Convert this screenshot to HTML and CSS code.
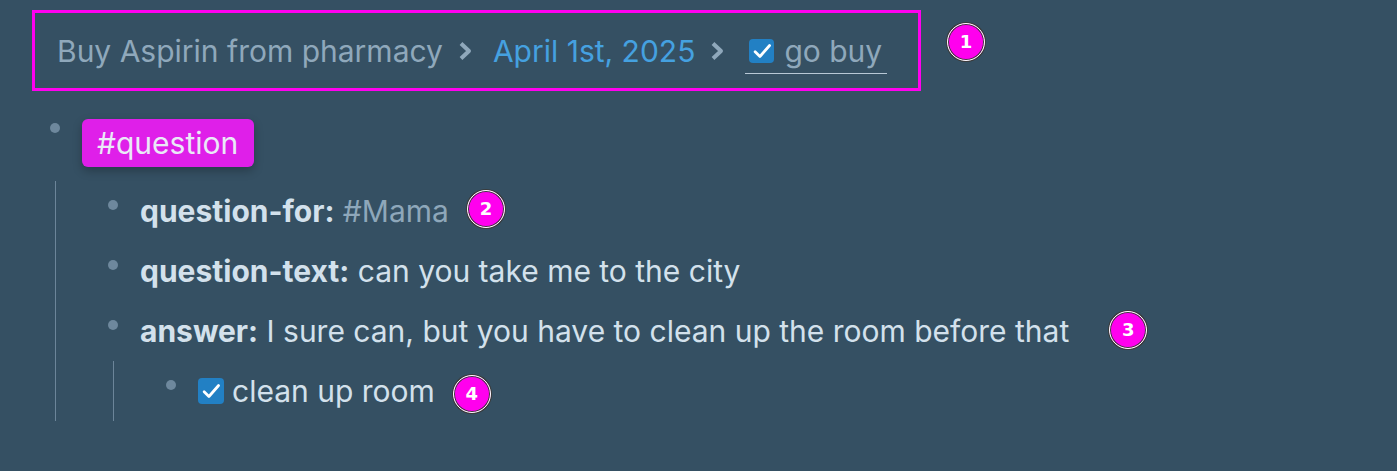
FILE: index.html
```html
<!DOCTYPE html>
<html lang="en">
<head>
  <meta charset="UTF-8">
  <title>Question block</title>
  <link rel="stylesheet" href="styles.css">
</head>
<body>
  <div class="page">

    <!-- Breadcrumb -->
    <div class="crumb-row">
      <div class="crumbs">
        <span class="crumb">Buy Aspirin from pharmacy</span>
        <svg class="chevron" viewBox="0 0 14 20"><path d="M3 2.5 L11 10 L3 17.5"/></svg>
        <span class="crumb crumb-date">April 1st, 2025</span>
        <svg class="chevron" viewBox="0 0 14 20"><path d="M3 2.5 L11 10 L3 17.5"/></svg>
        <span class="crumb-current">
          <span class="check check-sm"><svg viewBox="0 0 16 16"><path d="M3 8.5 L6.5 12 L13.5 4"/></svg></span>
          <span class="crumb">go buy</span>
        </span>
      </div>
      <span class="marker marker-1">1</span>
    </div>

    <!-- Blocks -->
    <div class="block block-top">
      <div class="bullet"><span class="dot"></span></div>
      <div class="content">
        <span class="tag">#question</span>
      </div>
    </div>

    <div class="children">
      <div class="block">
        <div class="bullet"><span class="dot"></span></div>
        <div class="content">
          <span class="text"><b>question-for:</b> <span class="ref">#Mama</span></span>
          <span class="marker marker-2">2</span>
        </div>
      </div>
      <div class="block">
        <div class="bullet"><span class="dot"></span></div>
        <div class="content">
          <span class="text"><b>question-text:</b> can you take me to the city</span>
        </div>
      </div>
      <div class="block">
        <div class="bullet"><span class="dot"></span></div>
        <div class="content">
          <span class="text"><b>answer:</b> I sure can, but you have to clean up the room before that</span>
          <span class="marker marker-3">3</span>
        </div>
      </div>

      <div class="children">
        <div class="block">
          <div class="bullet"><span class="dot"></span></div>
          <div class="content">
            <span class="check"><svg viewBox="0 0 16 16"><path d="M3 8.5 L6.5 12 L13.5 4"/></svg></span>
            <span class="text">clean up room</span>
            <span class="marker marker-4">4</span>
          </div>
        </div>
      </div>
    </div>

  </div>
</body>
</html>
```

FILE: styles.css
```css
body {
  margin: 0;
  background-color: #355063;
  font-family: Inter, "Noto Sans", sans-serif;
  color: #d3e1ec;
}
.page {
  padding: 10px 0 0 32px;
}
.crumb-row {
  display: flex;
  align-items: flex-start;
}
.crumbs {
  display: flex;
  align-items: center;
  height: 81px;
  box-sizing: border-box;
  width: 889px;
  border: 3px solid #ff00f0;
  padding-left: 22px;
  font-size: 30px;
}
.crumb {
  color: #8fa8bb;
}
.crumb-date {
  color: #45a1e0;
}
.chevron {
  flex-shrink: 0;
  width: 14px;
  height: 20px;
  margin: 0 21px 0 15px;
  fill: none;
  stroke: #8fa8bb;
  stroke-width: 4;
  stroke-linejoin: round;
}
.crumb-current {
  display: flex;
  align-items: center;
  gap: 10px;
  height: 44px;
  padding: 0 5px 0 4px;
  margin-top: 1px;
  border-bottom: 1px solid #b8c8d6;
}
.check {
  display: inline-flex;
  align-items: center;
  justify-content: center;
  flex-shrink: 0;
  width: 26px;
  height: 26px;
  border-radius: 4px;
  background-color: #2280c4;
  margin-right: 8px;
}
.check svg {
  width: 22px;
  height: 22px;
  fill: none;
  stroke: #ffffff;
  stroke-width: 2;
  stroke-linecap: round;
  stroke-linejoin: round;
}
.check-sm {
  width: 25px;
  height: 24px;
  margin-right: 0;
}
.marker {
  display: inline-flex;
  align-items: center;
  justify-content: center;
  flex-shrink: 0;
  width: 36px;
  height: 36px;
  border-radius: 50%;
  background-color: #ff00ee;
  border: 1px solid #ffffff;
  box-shadow: 0 0 0 1px #3a3a3a, inset 0 0 0 1px #3a3a3a;
  color: #ffffff;
  font-family: "DejaVu Sans", sans-serif;
  font-weight: bold;
  font-size: 18px;
  line-height: 1;
}
.marker-1 {
  margin: 13px 0 0 26px;
}
.marker-2 {
  margin: -4px 0 0 18px;
}
.marker-3 {
  margin: -2px 0 0 40px;
}
.marker-4 {
  margin: 6px 0 0 18px;
}
.block {
  display: flex;
  height: 60px;
  font-size: 30px;
}
.bullet {
  width: 50px;
  flex-shrink: 0;
  padding: 19px 0 0 18px;
  box-sizing: border-box;
}
.dot {
  display: block;
  width: 10px;
  height: 10px;
  border-radius: 50%;
  background-color: #6e889d;
}
.content {
  display: flex;
  align-items: center;
  white-space: nowrap;
}
.block-top {
  height: 48px;
  margin-top: 28px;
}
.block-top .bullet {
  padding-top: 4px;
}
.tag {
  display: inline-block;
  height: 48px;
  line-height: 48px;
  padding: 0 16px 0 15px;
  border-radius: 6px;
  background-color: #df1fe9;
  color: #eae9f7;
  box-shadow: 0 4px 10px rgba(0, 0, 0, 0.25);
}
.children {
  margin: 14px 0 0 23px;
  padding-left: 34px;
  border-left: 1px solid #6c8599;
}
.children .children {
  margin-top: 0;
}
.content b {
  font-weight: 700;
}
.ref {
  color: #8ea7ba;
}
```
